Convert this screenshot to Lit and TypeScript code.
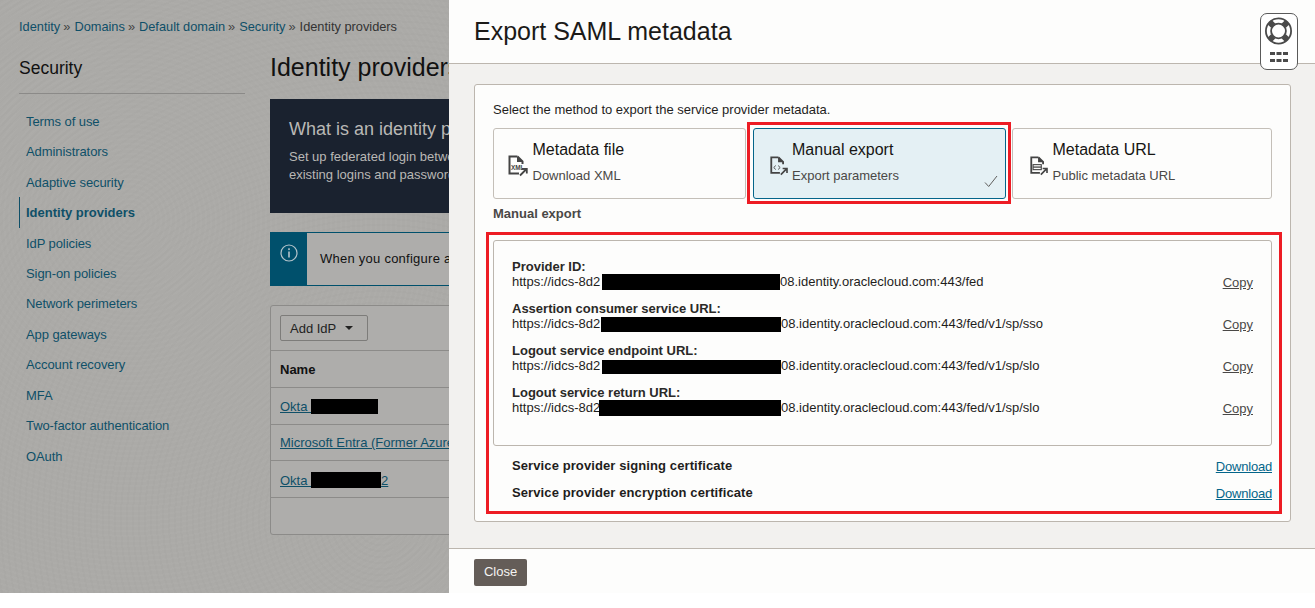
import { LitElement, html, css, svg } from "lit";
import { customElement } from "lit/decorators.js";
import { styleMap } from "lit/directives/style-map.js";

const NAV = ["Terms of use","Administrators","Adaptive security","Identity providers","IdP policies","Sign-on policies","Network perimeters","App gateways","Account recovery","MFA","Two-factor authentication","OAuth"];
const ROWS = [
  { label: "Provider ID:", bar: 178, pre: 90, h: 16, tail: "08.identity.oraclecloud.com:443/fed" },
  { label: "Assertion consumer service URL:", bar: 180, pre: 89, h: 15, tail: "08.identity.oraclecloud.com:443/fed/v1/sp/sso" },
  { label: "Logout service endpoint URL:", bar: 179, pre: 90, h: 14, tail: "08.identity.oraclecloud.com:443/fed/v1/sp/slo" },
  { label: "Logout service return URL:", bar: 182, pre: 87, h: 16, tail: "08.identity.oraclecloud.com:443/fed/v1/sp/slo" },
];
const docBase = svg`<path d="M10.5 1.5H2.5V18.5H12" fill="none" stroke="#444" stroke-width="2"/><path d="M10.5 1.5L15.5 6.5V9" fill="none" stroke="#444" stroke-width="2"/><path d="M10 1.5V7H15.5Z" fill="#444"/><path d="M13 20.5L19 14.5M15 13.8H19.8V18.6" fill="none" stroke="#444" stroke-width="1.8"/>`;

@customElement("app-root")
export class AppRoot extends LitElement {
  static styles = css`
    :host { display: block; height: 608px; background: #fff; font-family: "Liberation Sans", Arial, sans-serif; overflow: hidden; }
    .screen { display: flex; height: 593px; position: relative; }
    .dim { width: 449px; flex: none; overflow: hidden; padding-left: 19px; box-sizing: border-box; white-space: nowrap;
      background-color: #abaaa7;
      background-image: repeating-radial-gradient(circle at 130px 220px, rgba(255,255,255,.018) 0 2px, transparent 2px 5px), repeating-radial-gradient(circle at 380px 520px, rgba(0,0,0,.01) 0 2px, transparent 2px 6px); }
    .crumbs { height: 54px; display: flex; align-items: center; font-size: 12.8px; color: #333; padding-bottom: 2px; box-sizing: border-box; }
    .crumbs a { color: #0f4f68; }
    .crumbs i { font-style: normal; color: #444; margin: 0 4px 0 3px; }
    .cols { display: flex; }
    .side { width: 226px; margin-right: 25px; flex: none; }
    .side h2 { margin: 0; font: 400 17.5px/28px "Liberation Sans", sans-serif; color: #111; padding-bottom: 11px; border-bottom: 1px solid #8b8a88; }
    nav { margin-top: 11.8px; }
    nav div { height: 30.45px; line-height: 31px; padding-left: 7px; font-size: 13px; color: #0f5068; box-sizing: border-box; letter-spacing: -.08px; }
    nav .on { font-weight: 700; border-left: 1px solid #0f4f68; padding-left: 6px; letter-spacing: 0; }
    .main { width: 500px; flex: none; }
    .main h1 { margin: 0; height: 45px; font: 400 25px/26px "Liberation Sans", sans-serif; color: #111; }
    .hero { background: #1a222f; height: 114px; box-sizing: border-box; padding: 18px 19px; color: #b9b8b5; }
    .hero h3 { margin: 0 0 7px; font: 400 18px/24px "Liberation Sans", sans-serif; }
    .hero p { margin: 0; font-size: 13px; line-height: 18px; }
    .info { margin-top: 19px; height: 54px; display: flex; box-sizing: border-box; border: 1px solid #00506c; border-radius: 3px; background: #aeadab; }
    .info .ic { width: 37px; background: #00506c; display: flex; justify-content: center; padding-top: 12px; box-sizing: border-box; margin: -1px 0 -1px -1px; }
    .info span { margin: 0 0 2px 13px; align-self: center; font-size: 13px; color: #111; letter-spacing: .25px; }
    .table { margin-top: 19px; height: 230px; box-sizing: border-box; border: 1px solid #8c8b89; border-radius: 3px; background: #aeadab; font-size: 13px; }
    .toolbar { height: 45px; padding: 9px 9px 0; box-sizing: border-box; border-bottom: 1px solid #8c8b89; }
    .btn { width: 88px; height: 26px; display: flex; align-items: center; box-sizing: border-box; border: 1px solid #7d7c7a; border-radius: 2px; padding-left: 9px; font-size: 13px; color: #222; }
    .btn b { width: 0; height: 0; border: 4px solid transparent; border-top: 4.5px solid #222; border-bottom: 0; margin-left: 9px; }
    .tr { height: 36.8px; padding: 1px 0 0 9px; display: flex; align-items: center; box-sizing: border-box; border-bottom: 1px solid #8c8b89; color: #0f5068; }
    .tr.hd { font-weight: 700; color: #111; }
    .tr span { text-decoration: underline; }
    .tr em { display: inline-block; background: #000; height: 15px; vertical-align: -3px; }

    .panel { flex: 1; display: flex; flex-direction: column; background: #fdfdfc; min-width: 0; }
    .head { height: 64px; flex: none; box-sizing: border-box; border-bottom: 1px solid #bcb6ae; padding-left: 25px; display: flex; align-items: center; font-size: 25px; color: #1b1a18; padding-bottom: 1px; }
    .body { flex: 1; background: #f2f1ef; padding: 20px 25px 26px; display: flex; min-height: 0; box-sizing: border-box; }
    .card { flex: 1; background: #fdfdfc; border: 1px solid #bcb6ae; border-radius: 3px; padding: 17px 18px 0; font-size: 13px; color: #1f1e1c; box-sizing: border-box; }
    .lead { line-height: 15px; height: 26px; }
    .tiles { display: grid; grid-template-columns: 253px 253px 260px; column-gap: 6.5px; }
    .tile { position: relative; height: 71px; box-sizing: border-box; border: 1px solid #c4bfb8; border-radius: 3px; display: flex; padding-left: 13px; }
    .tile.sel { background: #e4f0f4; border-color: #04658a; padding-left: 15px; }
    .tile:nth-child(3) { padding-left: 16px; }
    .tile svg.ic { width: 22px; height: 22px; margin-top: 26px; flex: none; }
    .tile.sel svg.ic, .tile:nth-child(3) svg.ic { width: 20px; height: 20px; margin-top: 27px; }
    .tile .t { margin-left: 3.5px; }
    .tile .t1 { font-size: 16px; line-height: 20px; margin-top: 11px; color: #161513; }
    .tile .t2 { font-size: 13px; line-height: 15px; margin-top: 8px; color: #4a4846; }
    .tile .chk { position: absolute; right: 7px; bottom: 10px; width: 14px; height: 13px; }
    .sub { font-weight: 700; line-height: 15px; margin-top: 7px; height: 34px; color: #4a4846; }
    .box { height: 206px; box-sizing: border-box; border: 1px solid #bcb6ae; border-radius: 3px; padding: 18px 18px 0; }
    .row { display: flex; justify-content: space-between; height: 42px; line-height: 15px; white-space: nowrap; }
    .row .l { font-weight: 700; color: #2a2927; }
    .row .u { height: 15px; }
    .row .u em { display: inline-block; background: #000; vertical-align: -4px; }
    .row .p { display: inline-block; }
    .row a { color: #4a4846; text-decoration: underline; margin-top: 16px; }
    .cert { display: flex; justify-content: space-between; height: 27px; align-items: center; padding-left: 19px; font-weight: 700; color: #1f1e1c; letter-spacing: .1px; }
    .cert a { font-weight: 400; color: #04658a; text-decoration: underline; letter-spacing: -.2px; margin-top: 2px; }
    .certs { padding-top: 6px; }
    .foot { height: 45px; flex: none; box-sizing: border-box; border-top: 1px solid #bcb6ae; padding: 10px 0 0 25px; }
    .close { width: 53px; height: 27px; background: #645d58; color: #f5f4f2; border-radius: 2px; font-size: 13px; display: flex; align-items: center; justify-content: center; padding-bottom: 2px; box-sizing: border-box; }

    .help { position: absolute; left: 1260px; top: 13px; width: 38px; height: 57px; box-sizing: border-box; background: #fff; border: 1px solid #5a5a5a; border-radius: 7px; }
    .help svg { display: block; }
    .mark { position: absolute; border: 3px solid #ed1c24; box-sizing: border-box; pointer-events: none; }
    .m1 { left: 747px; top: 122px; width: 264px; height: 82px; }
    .m2 { left: 486px; top: 232px; width: 796px; height: 282px; }
  `;

  render() {
    return html`<div class="screen">
      <div class="dim">
        <div class="crumbs"><a>Identity</a><i>»</i><a>Domains</a><i>»</i><a>Default domain</a><i>»</i><a>Security</a><i>»</i><span>Identity providers</span></div>
        <div class="cols">
          <div class="side">
            <h2>Security</h2>
            <nav>${NAV.map((n) => html`<div class=${n === "Identity providers" ? "on" : ""}>${n}</div>`)}</nav>
          </div>
          <div class="main">
            <h1>Identity providers</h1>
            <div class="hero"><h3>What is an identity provider?</h3><p>Set up federated login between the identity domain and an<br />existing logins and passwords for your users.</p></div>
            <div class="info"><div class="ic"><svg width="18" height="18" viewBox="0 0 18 18"><circle cx="9" cy="9" r="8" fill="none" stroke="#b4c4cb" stroke-width="1.2"/><rect x="8.2" y="7.5" width="1.6" height="6" fill="#b4c4cb"/><rect x="8.2" y="4.3" width="1.6" height="1.8" fill="#b4c4cb"/></svg></div><span>When you configure an identity provider</span></div>
            <div class="table">
              <div class="toolbar"><div class="btn">Add IdP<b></b></div></div>
              <div class="tr hd">Name</div>
              <div class="tr"><span>Okta <em style="width:67px"></em></span></div>
              <div class="tr"><span>Microsoft Entra (Former Azure AD)</span></div>
              <div class="tr"><span>Okta <em style="width:70px;height:16px"></em>2</span></div>
            </div>
          </div>
        </div>
      </div>
      <div class="panel">
        <div class="head">Export SAML metadata</div>
        <div class="body"><div class="card">
          <div class="lead">Select the method to export the service provider metadata.</div>
          <div class="tiles">
            <div class="tile"><svg class="ic" viewBox="0 0 22 22">${docBase}<text x="4" y="14.5" font-size="6.4" font-weight="700" fill="#444" font-family="Liberation Sans">XML</text></svg><div class="t"><div class="t1">Metadata file</div><div class="t2">Download XML</div></div></div>
            <div class="tile sel"><svg class="ic" viewBox="0 0 22 22">${docBase}<path d="M7.5 10.5L5.2 12.7L7.5 14.9M10 10.5L12.3 12.7L10 14.9" fill="none" stroke="#444" stroke-width="1"/></svg><div class="t"><div class="t1">Manual export</div><div class="t2">Export parameters</div></div>
              <svg class="chk" viewBox="0 0 14 13"><path d="M1 7.5L4.7 11.5L13 1" fill="none" stroke="#5f5e5c" stroke-width="1"/></svg></div>
            <div class="tile"><svg class="ic" viewBox="0 0 22 22">${docBase}<rect x="4.5" y="9.5" width="9" height="5.5" fill="none" stroke="#444" stroke-width="1.2"/><rect x="4.5" y="11.5" width="9" height="1.4" fill="#444"/></svg><div class="t"><div class="t1">Metadata URL</div><div class="t2">Public metadata URL</div></div></div>
          </div>
          <div class="sub">Manual export</div>
          <div class="box">
            ${ROWS.map((r) => html`<div class="row"><div><div class="l">${r.label}</div><div class="u"><span class="p" style=${styleMap({ width: r.pre + "px" })}>https://idcs-8d2</span><em style=${styleMap({ width: r.bar + "px", height: r.h + "px" })}></em>${r.tail}</div></div><a>Copy</a></div>`)}
          </div>
          <div class="certs">
            <div class="cert"><span>Service provider signing certificate</span><a>Download</a></div>
            <div class="cert"><span>Service provider encryption certificate</span><a>Download</a></div>
          </div>
        </div></div>
        <div class="foot"><div class="close">Close</div></div>
      </div>
      <div class="help"><svg width="36" height="55" viewBox="0 0 36 55">
        <circle cx="17.5" cy="17" r="12.6" fill="none" stroke="#4a4a4a" stroke-width="1.8"/>
        <circle cx="17.5" cy="17" r="7.4" fill="none" stroke="#4a4a4a" stroke-width="1.8"/>
        <path d="M8.6 8.1L12.2 11.7M26.4 8.1L22.8 11.7M8.6 25.9L12.2 22.3M26.4 25.9L22.8 22.3" stroke="#4a4a4a" stroke-width="6" fill="none"/>
        <g fill="#4a4a4a"><rect x="9" y="38" width="5" height="3"/><rect x="15.5" y="38" width="5" height="3"/><rect x="22" y="38" width="5" height="3"/><rect x="9" y="45" width="5" height="3"/><rect x="15.5" y="45" width="5" height="3"/><rect x="22" y="45" width="5" height="3"/></g>
      </svg></div>
      <div class="mark m1"></div>
      <div class="mark m2"></div>
    </div>`;
  }
}
